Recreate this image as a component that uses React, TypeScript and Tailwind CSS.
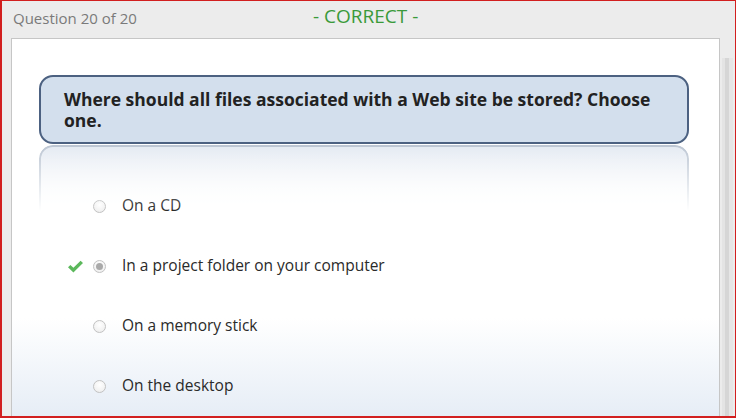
import React from 'react';

const options = [
  { label: 'On a CD', selected: false },
  { label: 'In a project folder on your computer', selected: true },
  { label: 'On a memory stick', selected: false },
  { label: 'On the desktop', selected: false },
];

const Radio: React.FC<{ selected: boolean }> = ({ selected }) => (
  <div className="w-[13px] h-[13px] rounded-full border border-[#c2c2c2] bg-[radial-gradient(circle_at_50%_35%,#ffffff_0%,#ebebeb_100%)] flex items-center justify-center">
    {selected && <div className="w-[7px] h-[7px] rounded-full bg-[#a9a9a9]"></div>}
  </div>
);

const Check: React.FC = () => (
  <svg width="17" height="13" viewBox="0 0 17 13">
    <path d="M1 7.2 L3.4 4.9 L6.4 7.8 L13.6 0.8 L16 3.1 L6.4 12.4 Z" fill="#5cb85c" />
  </svg>
);

export default function App() {
  return (
    <div className="w-[736px] h-[418px] border border-l-2 border-b-2 border-[#d21f1f] bg-[#ececec] flex flex-col overflow-hidden font-['Open_Sans',sans-serif]">
      {/* шапка */}
      <div className="h-[37px] shrink-0 relative flex items-start">
        <span className="ml-[11px] mt-[6px] text-[15px] text-[#7a7a7a]">Question 20 of 20</span>
        <span className="absolute left-[311px] top-[1px] text-[19px] text-[#3a9a3a]">- CORRECT -</span>
      </div>

      <div className="flex-1 flex">
        <div className="ml-[9px] w-[710px] border-t border-l border-r border-[#c6c6c6] bg-[linear-gradient(to_bottom,#ffffff_0%,#ffffff_74%,#e6edf6_100%)] pl-[27px] pt-[36px]">
          {/* вопрос */}
          <div className="w-[650px] h-[69px] rounded-[14px] border-2 border-[#4c6181] bg-[#d3dfed] pl-[23px] pt-[12px] pr-[20px]">
            <p className="text-[17.5px] leading-[21px] font-bold text-[#222]">
              Where should all files associated with a Web site be stored? Choose one.
            </p>
          </div>
          {/* отражение */}
          <div className="w-[650px] h-[66px] mt-[1px] rounded-t-[14px] border-t-2 border-x-2 border-[#bcc6d3] bg-[linear-gradient(to_bottom,#e4eaf2,#ffffff)] [mask-image:linear-gradient(to_bottom,#000_0%,transparent_100%)] -mb-[35px]"></div>

          <div className="flex flex-col">
            {options.map((o) => (
              <div key={o.label} className="h-[60px] flex items-center">
                <div className="w-[54px] flex justify-end pr-[9px]">
                  {o.selected && <Check />}
                </div>
                <Radio selected={o.selected} />
                <span className="ml-[16px] text-[15.5px] text-[#2a2a2a]">{o.label}</span>
              </div>
            ))}
          </div>
        </div>
        {/* правая полоса */}
        <div className="w-[15px] flex pt-[20px]">
          <div className="ml-[2px] w-[3px] bg-[#e4e4e4]"></div>
          <div className="w-[4px] bg-[#d6d6d6]"></div>
          <div className="w-[4px] bg-[#e6e6e6]"></div>
        </div>
      </div>
    </div>
  );
}
